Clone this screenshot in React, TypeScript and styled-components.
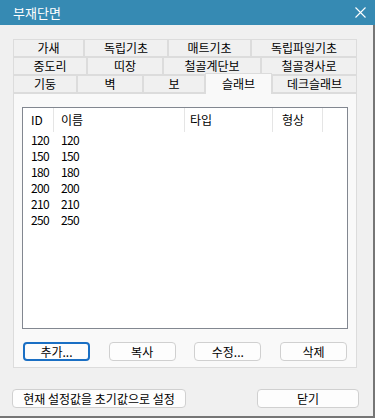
import styled, { createGlobalStyle } from "styled-components";

const GlobalStyle = createGlobalStyle`
  html, body {
    margin: 0;
    padding: 0;
  }
  body {
    font-family: "Noto Sans CJK KR", "Noto Sans", sans-serif;
    font-size: 12px;
    color: #000;
    background: #f0f0f0;
  }
  * {
    box-sizing: border-box;
  }
`;

const Window = styled.div`
  width: 375px;
  height: 418px;
  display: flex;
  flex-direction: column;
  background: #f0f0f0;
  overflow: hidden;
`;

const TitleBar = styled.div`
  height: 25px;
  flex: 0 0 25px;
  background: #368ab3;
  color: #fff;
  display: flex;
  align-items: center;
  justify-content: space-between;
  padding: 0 9px 0 13px;
  font-size: 13px;
  line-height: 1;
`;

const Body = styled.div`
  flex: 1;
  display: flex;
  flex-direction: column;
  padding: 14px 14px 0 12px;
  border-right: 2px solid #767676;
  border-bottom: 2px solid #767676;
`;

const Tabs = styled.div`
  display: flex;
  flex-direction: column;
  margin: 0 2px 0 1px;
`;

const TabRow = styled.div`
  display: flex;
  height: 18px;
`;

const Tab = styled.div<{ $w: number; $active?: boolean }>`
  width: ${(p) => p.$w}px;
  flex: 0 0 ${(p) => p.$w}px;
  display: flex;
  align-items: center;
  justify-content: center;
  border: 1px solid #dcdcdc;
  border-bottom: ${(p) => (p.$active ? "none" : "1px solid #dcdcdc")};
  background: ${(p) => (p.$active ? "#f9f9f9" : "#f0f0f0")};
  margin-top: ${(p) => (p.$active ? "-2px" : "0")};
  margin-bottom: ${(p) => (p.$active ? "-1px" : "0")};
  position: relative;
  z-index: ${(p) => (p.$active ? 1 : 0)};
  line-height: 1;
  white-space: nowrap;
`;

const Panel = styled.div`
  height: 275px;
  margin: 0 2px 0 1px;
  background: #f9f9f9;
  border: 1px solid #dcdcdc;
  padding: 13px 8px 6px 8px;
  display: flex;
  flex-direction: column;
`;

const ListBox = styled.div`
  height: 222px;
  background: #fff;
  border: 1px solid #828790;
`;

const cols = "31px 131px 88px 50px";

const HeaderRow = styled.div`
  display: grid;
  grid-template-columns: ${cols};
  height: 24px;
`;

const HeaderCell = styled.div<{ $pad: number }>`
  display: flex;
  align-items: center;
  padding-left: ${(p) => p.$pad}px;
  border-right: 1px solid #e5e5e5;
  line-height: 1;
`;

const DataRow = styled.div`
  display: grid;
  grid-template-columns: ${cols};
  height: 16px;
`;

const Cell = styled.div<{ $pad: number }>`
  display: flex;
  align-items: center;
  padding-left: ${(p) => p.$pad}px;
  line-height: 1;
  letter-spacing: -0.6px;
`;

const ButtonRow = styled.div`
  display: flex;
  justify-content: space-between;
  padding: 0 1px;
  margin-top: 13px;
`;

const Button = styled.div<{ $w: number; $focused?: boolean }>`
  width: ${(p) => p.$w}px;
  height: 19px;
  display: flex;
  align-items: center;
  justify-content: center;
  background: #fdfdfd;
  border: ${(p) => (p.$focused ? "2px solid #1a6fc4" : "1px solid #d0d0d0")};
  border-radius: 4px;
  line-height: 1;
  white-space: nowrap;
`;

const Footer = styled.div`
  display: flex;
  justify-content: space-between;
  margin-top: 21px;
`;

const tabRows: { label: string; w: number; active?: boolean }[][] = [
  [
    { label: "가새", w: 71 },
    { label: "독립기초", w: 84 },
    { label: "매트기초", w: 83 },
    { label: "독립파일기초", w: 106 },
  ],
  [
    { label: "중도리", w: 74 },
    { label: "띠장", w: 76 },
    { label: "철골계단보", w: 98 },
    { label: "철골경사로", w: 96 },
  ],
  [
    { label: "기둥", w: 64 },
    { label: "벽", w: 66 },
    { label: "보", w: 62 },
    { label: "슬래브", w: 67, active: true },
    { label: "데크슬래브", w: 85 },
  ],
];

const rows = ["120", "150", "180", "200", "210", "250"];

function CloseIcon() {
  return (
    <svg width="11" height="11" viewBox="0 0 11 11">
      <path d="M0.5 0.5 L10.5 10.5 M10.5 0.5 L0.5 10.5" stroke="#fff" strokeWidth="1.1" />
    </svg>
  );
}

export default function App() {
  return (
    <>
      <GlobalStyle />
      <Window>
        <TitleBar>
          <span>부재단면</span>
          <CloseIcon />
        </TitleBar>
        <Body>
          <Tabs>
            {tabRows.map((row, i) => (
              <TabRow key={i}>
                {row.map((t) => (
                  <Tab key={t.label} $w={t.w} $active={t.active}>
                    {t.label}
                  </Tab>
                ))}
              </TabRow>
            ))}
          </Tabs>
          <Panel>
            <ListBox>
              <HeaderRow>
                <HeaderCell $pad={8}>ID</HeaderCell>
                <HeaderCell $pad={7}>이름</HeaderCell>
                <HeaderCell $pad={5}>타입</HeaderCell>
                <HeaderCell $pad={9}>형상</HeaderCell>
              </HeaderRow>
              {rows.map((r) => (
                <DataRow key={r}>
                  <Cell $pad={8}>{r}</Cell>
                  <Cell $pad={7}>{r}</Cell>
                  <Cell $pad={5} />
                  <Cell $pad={9} />
                </DataRow>
              ))}
            </ListBox>
            <ButtonRow>
              <Button $w={67} $focused>추가...</Button>
              <Button $w={67}>복사</Button>
              <Button $w={67}>수정...</Button>
              <Button $w={67}>삭제</Button>
            </ButtonRow>
          </Panel>
          <Footer>
            <Button $w={174}>현재 설정값을 초기값으로 설정</Button>
            <Button $w={102}>닫기</Button>
          </Footer>
        </Body>
      </Window>
    </>
  );
}
